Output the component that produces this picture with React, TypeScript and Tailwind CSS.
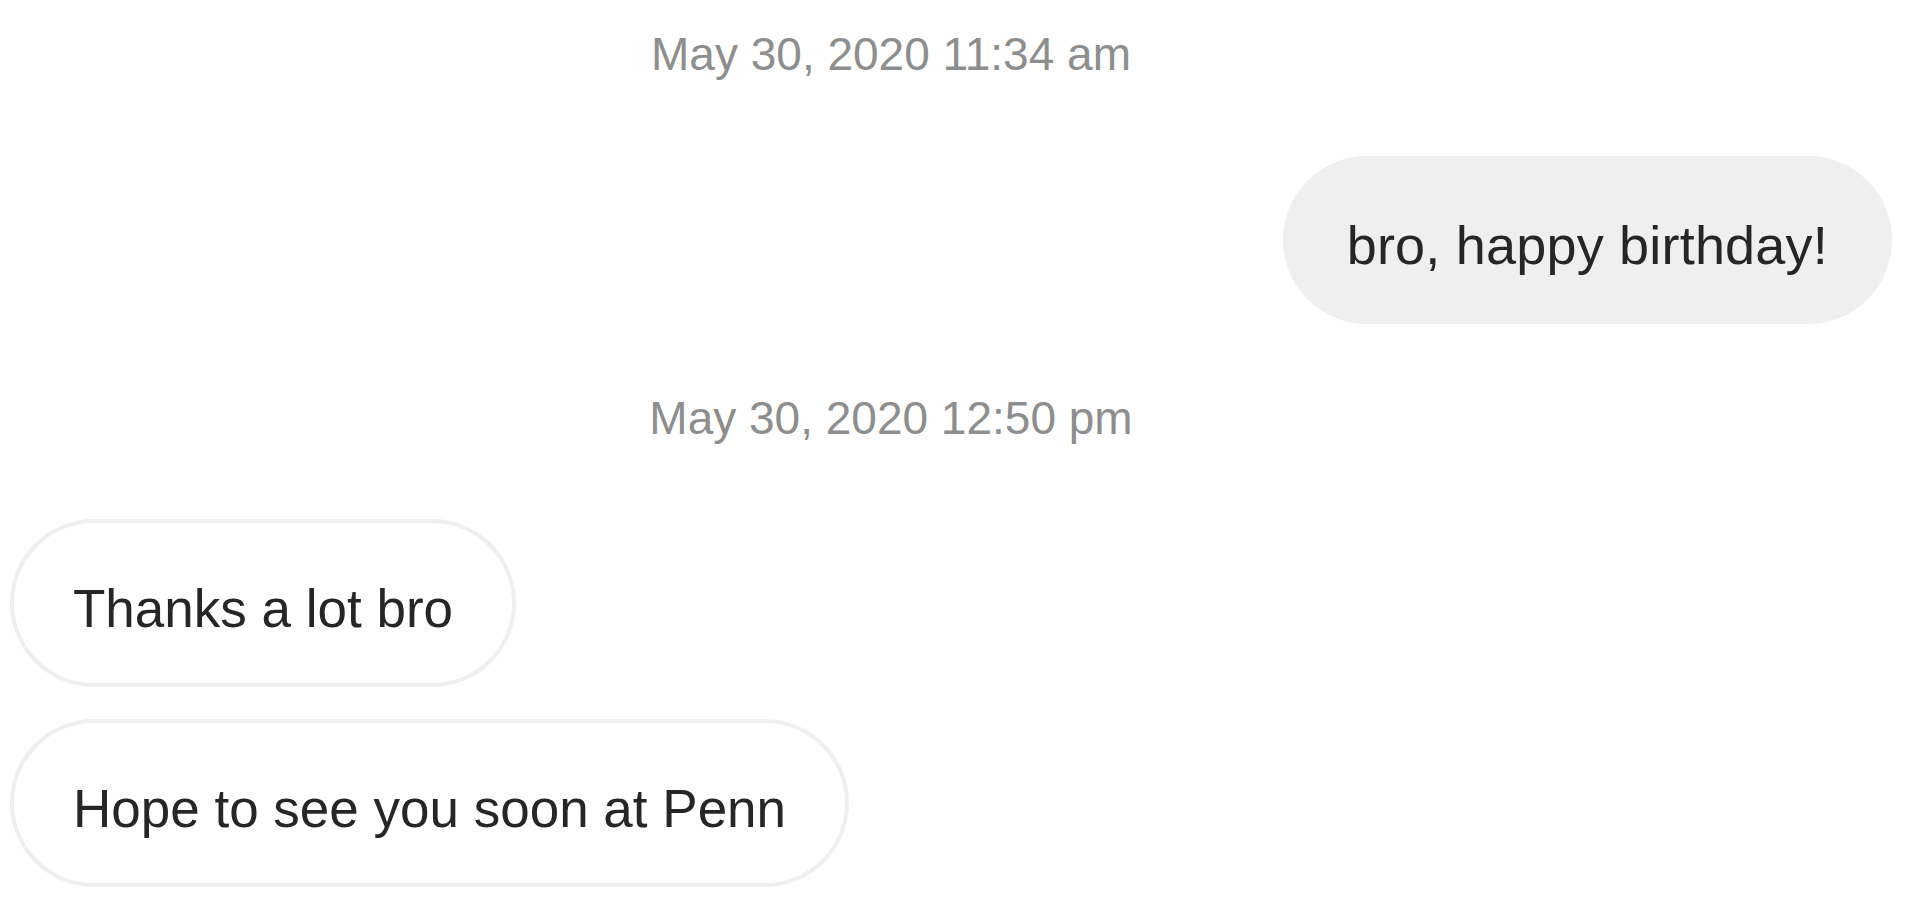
import React from "react";

type Msg = { text: string; mine?: boolean };

const Stamp: React.FC<{ label: string; className?: string }> = ({ label, className }) => (
  <div className={`flex justify-center pr-[120px] ${className ?? ""}`}>
    <span className="text-[46px] leading-none text-[#8e8e8e]">{label}</span>
  </div>
);

const Bubble: React.FC<Msg> = ({ text, mine }) => (
  <div className={`flex ${mine ? "justify-end" : "justify-start"}`}>
    <div
      className={
        mine
          ? "flex h-[168px] items-center rounded-full border-4 border-[#efefef] bg-[#efefef] px-[60px]"
          : "flex h-[168px] items-center rounded-full border-4 border-[#efefef] bg-white px-[59px]"
      }
    >
      <span
        className={`whitespace-nowrap pt-[10px] leading-none text-[#262626] ${
          mine ? "text-[54px] tracking-[0.2px]" : "text-[53px]"
        }`}
      >
        {text}
      </span>
    </div>
  </div>
);

const App: React.FC = () => {
  return (
    <div
      className="min-h-screen bg-white pl-[10px] pr-[28px] pt-[31px]"
      style={{ fontFamily: '"Liberation Sans", Arial, sans-serif' }}
    >
      <Stamp label="May 30, 2020 11:34 am" />
      <div className="mt-[79px]">
        <Bubble text="bro, happy birthday!" mine />
      </div>
      <Stamp label="May 30, 2020 12:50 pm" className="mt-[71px]" />
      <div className="mt-[78px] flex flex-col gap-[32px]">
        <Bubble text="Thanks a lot bro" />
        <Bubble text="Hope to see you soon at Penn" />
      </div>
    </div>
  );
};

export default App;
